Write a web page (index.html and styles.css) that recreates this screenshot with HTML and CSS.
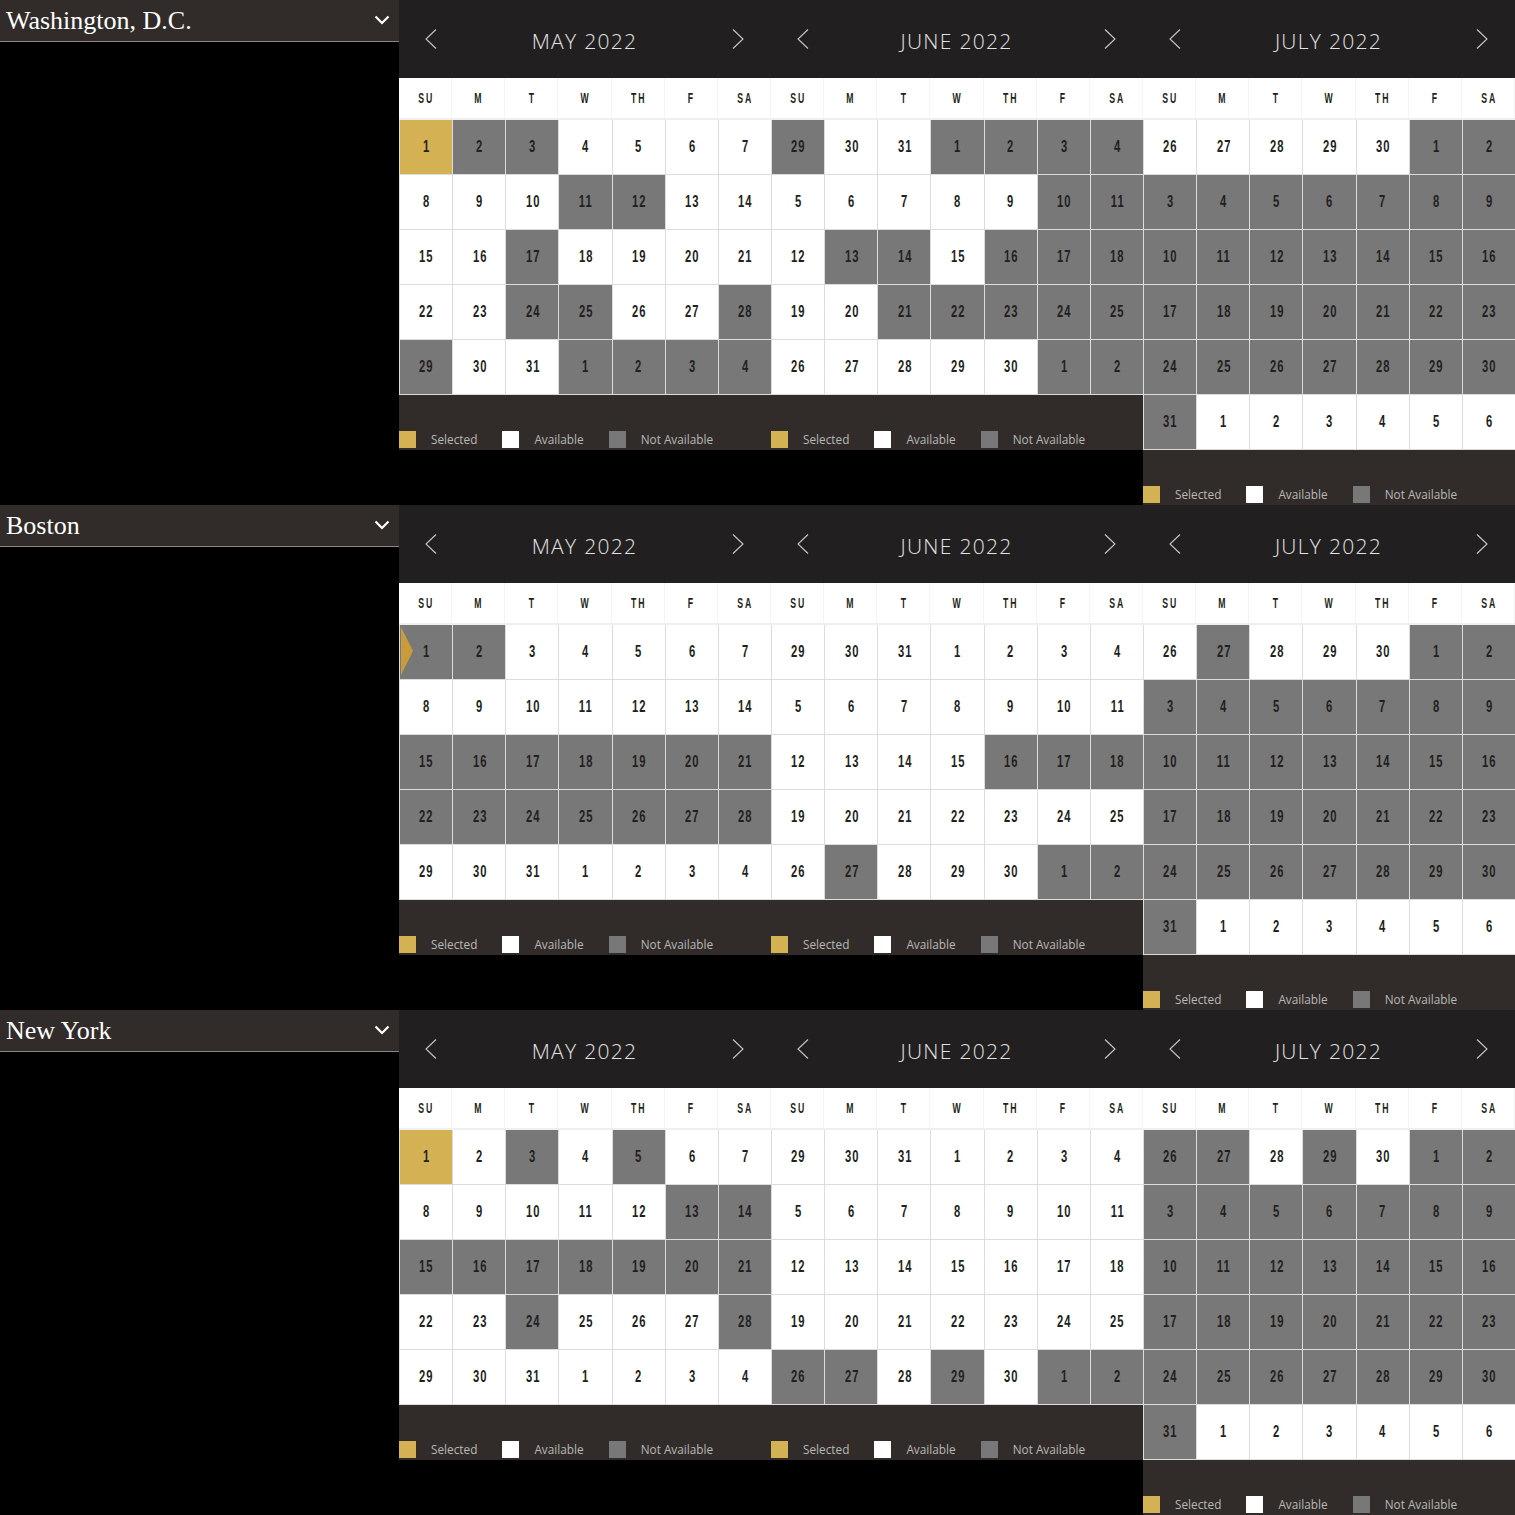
FILE: index.html
```html
<!DOCTYPE html>
<html>
	<head>
		<meta charset="utf-8">
		<title>Availability</title>
		<link rel="stylesheet" href="styles.css">
		<script type="text/javascript">
			window.onload = function(){
				//月份信息: 名称, 第一天是星期几, 天数, 上个月天数
				var months = [
					{name:"MAY 2022", start:0, days:31, prev:30},
					{name:"JUNE 2022", start:3, days:30, prev:31},
					{name:"JULY 2022", start:5, days:31, prev:30}
				];
				var weekNames = ["SU","M","T","W","TH","F","SA"];
				//G = selected, X = not available, W = available, T = not available + marker
				var data = {
					dc: [
						"GXXWWWW" + "WWWXXWW" + "WWXWWWW" + "WWXXWWX" + "XWWXXXX",
						"XWWXXXX" + "WWWWWXX" + "WXXWXXX" + "WWXXXXX" + "WWWWWXX",
						"WWWWWXX" + "XXXXXXX" + "XXXXXXX" + "XXXXXXX" + "XXXXXXX" + "XWWWWWW"
					],
					boston: [
						"TXWWWWW" + "WWWWWWW" + "XXXXXXX" + "XXXXXXX" + "WWWWWWW",
						"WWWWWWW" + "WWWWWWW" + "WWWWXXX" + "WWWWWWW" + "WXWWWXX",
						"WXWWWXX" + "XXXXXXX" + "XXXXXXX" + "XXXXXXX" + "XXXXXXX" + "XWWWWWW"
					],
					ny: [
						"GWXWXWW" + "WWWWWXX" + "XXXXXXX" + "WWXWWWX" + "WWWWWWW",
						"WWWWWWW" + "WWWWWWW" + "WWWWWWW" + "WWWWWWW" + "XXWXWXX",
						"XXWXWXX" + "XXXXXXX" + "XXXXXXX" + "XXXXXXX" + "XXXXXXX" + "XWWWWWW"
					]
				};

				var arrowL = '<svg class="arrow" width="12" height="20" viewBox="0 0 12 20"><polyline points="11,0.5 1,10 11,19.5" fill="none" stroke="#c8c8c8" stroke-width="1.1"/></svg>';
				var arrowR = '<svg class="arrow" width="12" height="20" viewBox="0 0 12 20"><polyline points="1,0.5 11,10 1,19.5" fill="none" stroke="#c8c8c8" stroke-width="1.1"/></svg>';

				var boxes = document.getElementsByClassName("months");
				for(var b = 0;b < boxes.length;b++){
					var list = data[boxes[b].getAttribute("data-city")];
					var html = "";
					for(var m = 0;m < months.length;m++){
						var mo = months[m];
						var marks = list[m];
						html += '<div class="month"><div class="month-head">' + arrowL +
							'<span class="month-title">' + mo.name + '</span>' + arrowR + '</div>';
						html += '<div class="week">';
						for(var w = 0;w < 7;w++){
							html += '<span><b>' + weekNames[w] + '</b></span>';
						}
						html += '</div><div class="days">';
						for(var i = 0;i < marks.length;i++){
							var n = i - mo.start + 1;
							if(n < 1){
								n = mo.prev + n;
							}else if(n > mo.days){
								n = n - mo.days;
							}
							var c = marks.charAt(i);
							var cls = "day";
							if(c == "G") cls += " sel";
							if(c == "X") cls += " off";
							if(c == "T") cls += " off mark";
							html += '<div class="' + cls + '"><b>' + n + '</b></div>';
						}
						html += '</div><div class="legend">' +
							'<i class="sq sq-sel"></i><span>Selected</span>' +
							'<i class="sq sq-free"></i><span>Available</span>' +
							'<i class="sq sq-off"></i><span>Not Available</span></div></div>';
					}
					boxes[b].innerHTML = html;
				}
			}
		</script>
	</head>
	<body>
		<div class="city">
			<div class="city-side">
				<div class="city-head">
					<h2 class="city-name">Washington, D.C.</h2>
					<svg class="chev" width="16" height="10" viewBox="0 0 16 10"><polyline points="1.5,1.5 8,8 14.5,1.5" fill="none" stroke="#fff" stroke-width="2.2"/></svg>
				</div>
			</div>
			<div class="months" data-city="dc"></div>
		</div>
		<div class="city">
			<div class="city-side">
				<div class="city-head">
					<h2 class="city-name">Boston</h2>
					<svg class="chev" width="16" height="10" viewBox="0 0 16 10"><polyline points="1.5,1.5 8,8 14.5,1.5" fill="none" stroke="#fff" stroke-width="2.2"/></svg>
				</div>
			</div>
			<div class="months" data-city="boston"></div>
		</div>
		<div class="city">
			<div class="city-side">
				<div class="city-head">
					<h2 class="city-name">New York</h2>
					<svg class="chev" width="16" height="10" viewBox="0 0 16 10"><polyline points="1.5,1.5 8,8 14.5,1.5" fill="none" stroke="#fff" stroke-width="2.2"/></svg>
				</div>
			</div>
			<div class="months" data-city="ny"></div>
		</div>
	</body>
</html>
```

FILE: styles.css
```css
*{
	margin: 0;
	padding: 0;
	box-sizing: border-box;
}
body{
	background-color: #000;
	font-family: "Open Sans", "Liberation Sans", sans-serif;
}
.city{
	display: flex;
	align-items: flex-start;
	height: 505px;
}
.city-side{
	width: 399px;
	flex: none;
}
.city-head{
	height: 42px;
	background-color: #312c29;
	border-bottom: 1px solid #8a8580;
	display: flex;
	align-items: center;
	justify-content: space-between;
	padding: 0 9px 0 6px;
}
.city-name{
	font-family: "Liberation Serif", "DejaVu Serif", serif;
	font-size: 26px;
	font-weight: normal;
	color: #fff;
	line-height: 41px;
}
.chev{
	display: block;
	margin-top: -2px;
}
.months{
	display: flex;
	align-items: flex-start;
}
.month{
	width: 372px;
}
.month-head{
	height: 78px;
	background-color: #221f20;
	display: flex;
	align-items: center;
	justify-content: space-between;
	padding: 0 27px 0 26px;
}
.arrow{
	display: block;
}
.month-title{
	font-family: "Open Sans", sans-serif;
	font-weight: 300;
	font-size: 21px;
	letter-spacing: 1.3px;
	color: #e2e2e2;
	padding-top: 4px;
}
.week{
	display: grid;
	grid-template-columns: repeat(7, 1fr);
	height: 42px;
	background-color: #fff;
	border-bottom: 2px solid #efefef;
}
.week span{
	display: flex;
	align-items: center;
	justify-content: center;
	border-right: 1px solid #f4f4f4;
	font-family: "Liberation Sans", "Arial", sans-serif;
	font-weight: bold;
	font-size: 14px;
	color: #231f20;
}
.week b{
	display: inline-block;
	letter-spacing: 3px;
	padding-left: 3px;
	transform: scaleX(0.62);
}
.days{
	display: grid;
	grid-template-columns: repeat(7, 1fr);
	gap: 1px;
	background-color: #dcdcdc;
	padding: 0 0 1px 1px;
}
.day{
	height: 54px;
	background-color: #fff;
	display: flex;
	align-items: center;
	justify-content: center;
	position: relative;
	font-family: "Liberation Sans", "Arial", sans-serif;
	font-weight: bold;
	font-size: 17px;
	color: #231f20;
}
.day b{
	display: inline-block;
	letter-spacing: 1.5px;
	padding-left: 1.5px;
	transform: scaleX(0.66);
}
.day.off{
	background-color: #787878;
}
.day.sel{
	background-color: #d4b254;
}
.day.mark::before{
	content: "";
	position: absolute;
	left: 1px;
	top: 2px;
	border-left: 12px solid #c99b3b;
	border-top: 24.5px solid transparent;
	border-bottom: 24.5px solid transparent;
}
.legend{
	height: 55px;
	background-color: #312c29;
	display: flex;
	align-items: center;
	padding-top: 33px;
	font-size: 11.8px;
	color: #b8b8b8;
}
.sq{
	display: block;
	width: 17px;
	height: 17px;
	margin-right: 15px;
}
.sq-sel{
	background-color: #d4b254;
}
.sq-free{
	background-color: #fff;
}
.sq-off{
	background-color: #787878;
}
.legend span{
	margin-right: 25px;
}
```
